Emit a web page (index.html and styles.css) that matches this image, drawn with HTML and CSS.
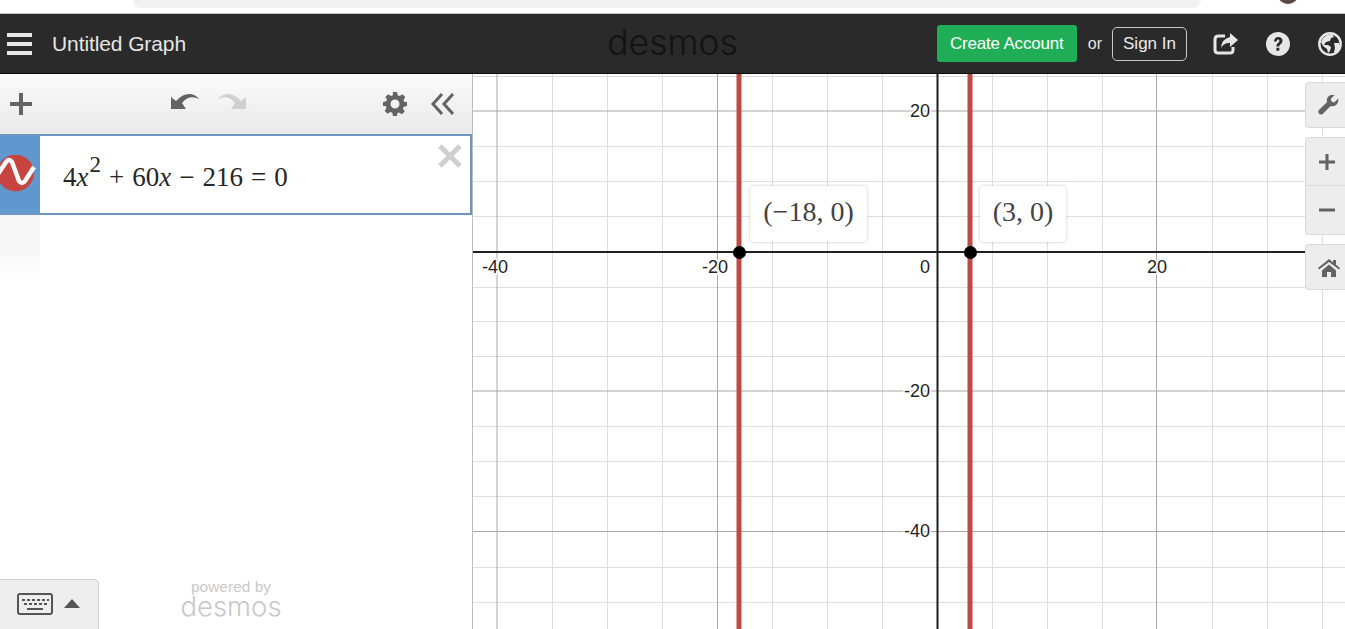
FILE: index.html
```html
<!DOCTYPE html>
<html lang="en">
<head>
    <meta charset="UTF-8">
    <title>Desmos | Graphing Calculator</title>
    <link rel="stylesheet" href="styles.css">
</head>
<body>
    <div class="browser-strip">
        <div class="url-bar"></div>
        <div class="avatar"></div>
    </div>

    <header class="topbar">
        <div class="topbar-left">
            <svg class="hamburger" width="26" height="22" viewBox="0 0 26 22"><path d="M0 0h25v4H0zM0 9h25v4H0zM0 18h25v4H0z" fill="#e6e6e6"/></svg>
            <span class="graph-title">Untitled Graph</span>
        </div>
        <div class="logo">desmos</div>
        <div class="topbar-right">
            <button class="create-btn">Create Account</button>
            <span class="or">or</span>
            <button class="signin-btn">Sign In</button>
            <svg class="top-icon share-icon" width="26" height="24" viewBox="0 0 26 24"><path d="M12 4H5.500Q2 4 2 7.500V18q0 3 3.500 3H17q3 0 3-3v-3" fill="none" stroke="#e6e6e6" stroke-width="3"/><path d="M17 1l8 7-8 7v-4q-6-.5-9 5 .5-9 9-11z" fill="#e6e6e6"/></svg>
            <svg class="top-icon help-icon" width="24" height="24" viewBox="0 0 24 24"><circle cx="12" cy="12" r="12" fill="#e6e6e6"/><path d="M8 9.500Q8.300 5 12.300 5t4.200 3.800c0 3.400-3.200 3.200-3.200 5.700h-2.900c0-3.500 3-3.500 3-5.400 0-1-.5-1.700-1.300-1.700-1 0-1.300.8-1.400 2z" fill="#2a2a2a"/><rect x="10.400" y="15.800" width="2.900" height="2.900" fill="#2a2a2a"/></svg>
            <svg class="top-icon globe-icon" width="24" height="24" viewBox="0 0 24 24"><circle cx="12" cy="12" r="10.700" fill="none" stroke="#e6e6e6" stroke-width="2.400"/><path d="M9 3l5-1 2 3-3 1-1 3-4 1-2 3 4 0 3 2-1 4-2 2-1-4-4-3-2-4 2-4zM16 11l5 0 1 4-4 6-2-1 1-4z" fill="#e6e6e6"/></svg>
        </div>
    </header>

    <main class="workspace">
        <aside class="sidebar">
            <div class="toolbar">
                <svg class="add-icon" width="24" height="24" viewBox="0 0 24 24"><path d="M10 1h4v9h9v4h-9v9h-4v-9H1v-4h9z" fill="#636363"/></svg>
                <div class="undo-redo">
                    <svg width="29" height="17" viewBox="0 0 29 17"><path d="M0 16V4L5 8Q12 0 20 1Q25 2 28 6Q22 3 17 5Q13 7 11 10L15 16z" fill="#636363"/></svg>
                    <svg width="29" height="17" viewBox="0 0 29 17"><path d="M28 16V4L23 8Q16 0 8 1Q3 2 0 6Q6 3 11 5Q15 7 17 10L13 16z" fill="#cfcfcf"/></svg>
                </div>
                <svg class="gear-icon" width="24" height="24" viewBox="0 0 24 24"><path d="M12 7.500a4.500 4.500 0 1 0 0 9 4.500 4.500 0 0 0 0-9z M10 0h4l.7 3.300 1.900.8L19.500 2.300l2.800 2.800-1.800 2.900.8 1.900L24 10v4l-3.300.7-.8 1.900 1.800 2.900-2.800 2.800-2.900-1.800-1.900.8L14 24h-4l-.7-3.300-1.900-.8-2.900 1.800-2.800-2.800 1.800-2.900-.8-1.900L0 14v-4l3.300-.7.8-1.900L2.300 5.100l2.800-2.800L8 4.100l1.900-.8z" fill="#636363" fill-rule="evenodd"/></svg>
                <svg class="collapse-icon" width="24" height="22" viewBox="0 0 24 22"><path d="M11 1L2 11l9 10M22 1l-9 10 9 10" fill="none" stroke="#636363" stroke-width="3"/></svg>
            </div>

            <div class="expression">
                <div class="expr-tab">
                    <svg class="wave-icon" width="40" height="40" viewBox="0 0 40 40"><circle cx="15.500" cy="18" r="18.500" fill="#c74440"/><path d="M-4 22L6 7Q9 3 12 7L19 26Q22 30 25 26L34 12" fill="none" stroke="#fff" stroke-width="4.500"/></svg>
                </div>
                <div class="expr-math"><span>4<i>x</i><sup>2</sup></span><span class="op">+</span><span>60<i>x</i></span><span class="op">−</span><span>216</span><span class="op">=</span><span>0</span></div>
                <svg class="expr-close" width="26" height="26" viewBox="0 0 26 26"><path d="M3 3l20 20M23 3L3 23" stroke="#cfcfcf" stroke-width="5"/></svg>
            </div>

            <div class="empty-row"><div class="empty-tab"></div></div>

            <div class="sidebar-footer">
                <div class="keypad-btn">
                    <svg width="36" height="22" viewBox="0 0 36 22"><rect x="1" y="1" width="34" height="20" rx="2" fill="none" stroke="#555" stroke-width="2"/><path d="M5 6h3v2H5zM10 6h3v2h-3zM15 6h3v2h-3zM20 6h3v2h-3zM25 6h3v2h-3zM30 6h2v2h-2zM7 10h3v2H7zM12 10h3v2h-3zM17 10h3v2h-3zM22 10h3v2h-3zM27 10h3v2h-3zM10 15h16v2H10z" fill="#555"/></svg>
                    <div class="caret"></div>
                </div>
                <div class="powered">
                    <span class="powered-by">powered by</span>
                    <span class="powered-logo">desmos</span>
                </div>
            </div>
        </aside>

        <section class="graph">
            <svg class="grid" width="872" height="555" viewBox="473 74 872 555">
                <g class="minor">
                    <path d="M552.500 74V629M607.500 74V629M662.500 74V629M772.500 74V629M827.500 74V629M882.500 74V629M992.500 74V629M1047.500 74V629M1102.500 74V629M1212.500 74V629M1267.500 74V629M1322.500 74V629"/>
                    <path d="M473 76.500H1345M473 146.500H1345M473 181.500H1345M473 216.500H1345M473 287.500H1345M473 321.500H1345M473 356.500H1345M473 426.500H1345M473 461.500H1345M473 496.500H1345M473 567.500H1345M473 602.500H1345"/>
                </g>
                <g class="major">
                    <path d="M497 74V629M717.500 74V629M1156.500 74V629"/>
                    <path d="M473 111H1345M473 391H1345M473 531.500H1345"/>
                </g>
                <path class="axis" d="M937.500 74V629M473 252H1345"/>
                <path class="curve" d="M739 74V629M970 74V629"/>
                <circle cx="739.500" cy="252.500" r="6.500"/>
                <circle cx="970.500" cy="252.500" r="6.500"/>
                <g class="ticks">
                    <text x="508" y="273" text-anchor="end">-40</text>
                    <text x="728" y="273" text-anchor="end">-20</text>
                    <text x="930" y="273" text-anchor="end">0</text>
                    <text x="1157" y="273" text-anchor="middle">20</text>
                    <text x="930" y="117" text-anchor="end">20</text>
                    <text x="930" y="397" text-anchor="end">-20</text>
                    <text x="930" y="537" text-anchor="end">-40</text>
                </g>
            </svg>

            <div class="point-label label-a">(−18, 0)</div>
            <div class="point-label label-b">(3, 0)</div>

            <div class="graph-controls">
                <div class="ctrl-btn ctrl-single">
                    <svg width="21" height="21" viewBox="0 0 24 24"><path d="M23 4l-4.500 4.500-3-1-1-3L19 0q-5-1-7.500 2T10.500 8L1 17q-1.500 2 0 4t4 1l9.500-9.500q3.500 1 6.500-1.500t2-7z" fill="#636363"/></svg>
                </div>
                <div class="ctrl-group">
                    <div class="ctrl-btn ctrl-half">
                        <svg width="18" height="18" viewBox="0 0 18 18"><path d="M7.500 1h3v6.500H17v3h-6.500V17h-3v-6.500H1v-3h6.500z" fill="#636363"/></svg>
                    </div>
                    <div class="ctrl-btn ctrl-half ctrl-lower">
                        <svg width="18" height="18" viewBox="0 0 18 18"><rect x="1" y="7.500" width="16" height="3" fill="#636363"/></svg>
                    </div>
                </div>
                <div class="ctrl-btn ctrl-single">
                    <svg width="22" height="20" viewBox="0 0 22 20"><path d="M11 2L0 11l1 1.500L11 5l10 7.500L22 11l-4-3.200V3h-3v2.400zM4 13.500L11 7.500l7 6V20h-5v-5H9v5H4z" fill="#636363"/></svg>
                </div>
            </div>
        </section>
    </main>
</body>
</html>
```

FILE: styles.css
```css
* {
    box-sizing: border-box;
}

html, body {
    margin: 0;
    padding: 0;
    height: 629px;
    overflow: hidden;
    background-color: #ffffff;
    font-family: "Liberation Sans", Arial, sans-serif;
}

/* tira do navegador no topo */
.browser-strip {
    height: 13px;
    position: relative;
    background-color: #ffffff;
    overflow: hidden;
}

.url-bar {
    margin-left: 133px;
    width: 1068px;
    height: 8px;
    background-color: #f1f1f1;
    border-radius: 0 0 16px 16px;
}

.avatar {
    position: absolute;
    top: -14px;
    left: 1278px;
    width: 20px;
    height: 18px;
    border-radius: 50%;
    background-color: #5a4a44;
}

.topbar {
    height: 61px;
    background-color: #2a2a2a;
    border-top: 1px solid #c4c4c4;
    border-bottom: 1px solid #0c0c0c;
    display: grid;
    grid-template-columns: 1fr auto 1fr;
    align-items: center;
    color: #e6e6e6;
}

.topbar-left {
    display: flex;
    align-items: center;
    padding-left: 7px;
}

.graph-title {
    margin-left: 19px;
    font-size: 21px;
    letter-spacing: -0.1px;
}

.logo {
    font-family: "Inter", sans-serif;
    font-weight: 300;
    font-size: 35.500px;
    line-height: 1;
    margin-top: -2px;
    color: #131313;
}

.topbar-right {
    display: flex;
    align-items: center;
    justify-content: flex-end;
    margin-right: 3px;
}

.create-btn {
    width: 140px;
    height: 37px;
    border: 0;
    border-radius: 3px;
    background-color: #1fae55;
    color: #ffffff;
    font-family: inherit;
    font-size: 17px;
    letter-spacing: -0.2px;
    padding: 0;
}

.or {
    margin-left: 11px;
    font-size: 16px;
}

.signin-btn {
    margin-left: 10px;
    width: 75px;
    height: 34px;
    border: 1px solid #c8c8c8;
    border-radius: 5px;
    background-color: transparent;
    color: #ececec;
    font-family: inherit;
    font-size: 17px;
    padding: 0;
}

.top-icon {
    display: block;
}

.share-icon {
    margin-left: 26px;
}

.help-icon {
    margin-left: 27px;
}

.globe-icon {
    margin-left: 28px;
}

.workspace {
    display: flex;
    height: 555px;
}

.sidebar {
    width: 473px;
    height: 555px;
    flex-shrink: 0;
    display: flex;
    flex-direction: column;
    border-right: 1px solid #bdbdbd;
    background-color: #ffffff;
}

.toolbar {
    height: 60px;
    flex-shrink: 0;
    display: flex;
    align-items: center;
    padding-left: 9px;
    background: linear-gradient(#fbfbfb, #e9e9e9);
}

.undo-redo {
    display: flex;
    gap: 18px;
    margin-left: 138px;
    margin-top: -6px;
}

.gear-icon {
    margin-left: 136px;
}

.collapse-icon {
    margin-left: 24px;
}

.expression {
    height: 81px;
    flex-shrink: 0;
    display: flex;
    position: relative;
    border: 2px solid #6f95c3;
    border-left: 0;
}

.expr-tab {
    width: 40px;
    flex-shrink: 0;
    background-color: #6097cf;
    display: flex;
    align-items: center;
}

.wave-icon {
    display: block;
}

.expr-math {
    padding-left: 23px;
    padding-top: 28px;
    font-family: "Liberation Serif", "Times New Roman", serif;
    font-size: 27px;
    line-height: 1;
    color: #262626;
    white-space: nowrap;
}

.expr-math sup {
    font-size: 23px;
    line-height: 0;
    vertical-align: 14px;
    margin-left: 1px;
}

.expr-math .op {
    margin: 0 8px;
}

.expr-close {
    position: absolute;
    top: 7px;
    right: 7px;
}

.empty-row {
    flex: 1;
}

.empty-tab {
    width: 40px;
    height: 66px;
    background: linear-gradient(#f6f6f6 50%, #ffffff);
}

.sidebar-footer {
    height: 50px;
    flex-shrink: 0;
    display: flex;
    align-items: flex-end;
}

.keypad-btn {
    width: 99px;
    height: 50px;
    background-color: #eeeeee;
    border: 1px solid #d0d0d0;
    border-left: 0;
    border-bottom: 0;
    border-radius: 0 5px 0 0;
    display: flex;
    align-items: center;
    padding: 0 0 2px 17px;
}

.caret {
    margin-left: 11px;
    width: 0;
    height: 0;
    border-left: 8px solid transparent;
    border-right: 8px solid transparent;
    border-bottom: 9px solid #555555;
}

.powered {
    margin-left: 80px;
    width: 104px;
    display: flex;
    flex-direction: column;
    align-items: center;
    color: #c9c9c9;
    padding-bottom: 11px;
}

.powered-by {
    font-size: 15.500px;
    line-height: 15px;
}

.powered-logo {
    font-family: "Inter", sans-serif;
    font-weight: 300;
    font-size: 27.500px;
    line-height: 24px;
}

.graph {
    flex: 1;
    position: relative;
    overflow: hidden;
}

.grid {
    display: block;
}

.minor path {
    stroke: #dedede;
    stroke-width: 1;
    fill: none;
}

.major path {
    stroke: #a9a9a9;
    stroke-width: 1;
    fill: none;
}

.axis {
    stroke: #1f1f1f;
    stroke-width: 2;
    fill: none;
}

.curve {
    stroke: #bd4a45;
    stroke-width: 5;
    fill: none;
}

.ticks text {
    font-size: 18px;
    fill: #222222;
    stroke: #ffffff;
    stroke-width: 3px;
    paint-order: stroke;
}

.point-label {
    position: absolute;
    top: 112px;
    height: 56px;
    padding-bottom: 5px;
    display: flex;
    align-items: center;
    justify-content: center;
    background-color: #ffffff;
    border-radius: 4px;
    box-shadow: 0 0 3px rgba(0, 0, 0, 0.25);
    font-family: "Liberation Serif", "Times New Roman", serif;
    font-size: 28px;
    color: #444444;
}

.label-a {
    left: 277px;
    width: 117px;
}

.label-b {
    left: 507px;
    width: 86px;
}

.graph-controls {
    position: absolute;
    top: 8px;
    left: 832px;
    width: 45px;
    display: flex;
    flex-direction: column;
    gap: 9px;
}

.ctrl-group {
    display: flex;
    flex-direction: column;
}

.ctrl-btn {
    background-color: #ededed;
    border: 1px solid #dadada;
    border-right: 0;
    display: flex;
    align-items: center;
    padding-left: 12px;
}

.ctrl-single {
    height: 46px;
    border-radius: 4px 0 0 4px;
}

.ctrl-half {
    height: 49px;
    border-radius: 4px 0 0 0;
}

.ctrl-lower {
    border-top: 0;
    border-radius: 0 0 0 4px;
}
```
